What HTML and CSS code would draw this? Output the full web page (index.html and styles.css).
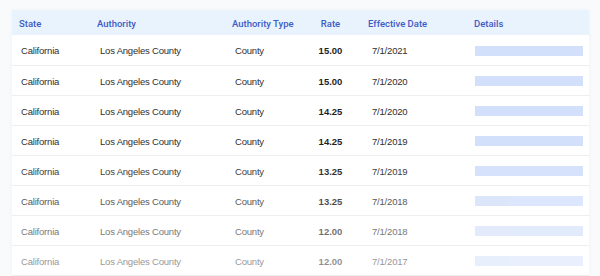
FILE: index.html
```html
<!DOCTYPE html>
<html lang="en">
<head>
<meta charset="utf-8">
<title>Rates</title>
<link rel="stylesheet" href="styles.css">
</head>
<body>
<div class="card">
  <table class="rates">
    <colgroup>
      <col class="c-state"><col class="c-auth"><col class="c-type"><col class="c-rate"><col class="c-date"><col class="c-details">
    </colgroup>
    <thead>
      <tr>
        <th>State</th><th>Authority</th><th>Authority Type</th><th class="num">Rate</th><th>Effective Date</th><th>Details</th>
      </tr>
    </thead>
    <tbody>
      <tr class="r1"><td>California</td><td>Los Angeles County</td><td>County</td><td class="num">15.00</td><td>7/1/2021</td><td><span class="bar"></span></td></tr>
      <tr class="r2"><td>California</td><td>Los Angeles County</td><td>County</td><td class="num">15.00</td><td>7/1/2020</td><td><span class="bar"></span></td></tr>
      <tr class="r3"><td>California</td><td>Los Angeles County</td><td>County</td><td class="num">14.25</td><td>7/1/2020</td><td><span class="bar"></span></td></tr>
      <tr class="r4"><td>California</td><td>Los Angeles County</td><td>County</td><td class="num">14.25</td><td>7/1/2019</td><td><span class="bar"></span></td></tr>
      <tr class="r5"><td>California</td><td>Los Angeles County</td><td>County</td><td class="num">13.25</td><td>7/1/2019</td><td><span class="bar"></span></td></tr>
      <tr class="r6"><td>California</td><td>Los Angeles County</td><td>County</td><td class="num">13.25</td><td>7/1/2018</td><td><span class="bar"></span></td></tr>
      <tr class="r7"><td>California</td><td>Los Angeles County</td><td>County</td><td class="num">12.00</td><td>7/1/2018</td><td><span class="bar"></span></td></tr>
      <tr class="r8"><td>California</td><td>Los Angeles County</td><td>County</td><td class="num">12.00</td><td>7/1/2017</td><td><span class="bar"></span></td></tr>
    </tbody>
  </table>
</div>
</body>
</html>
```
FILE: styles.css
```css
html, body {
  margin: 0;
  padding: 0;
  background: #f9fafb;
  font-family: "Liberation Sans", Arial, sans-serif;
  overflow: hidden;
}
.card {
  margin: 10px 11px 0 12px;
  background: #ffffff;
  box-shadow: 0 0 4px rgba(0, 0, 0, 0.04);
}
.rates {
  width: 577px;
  border-collapse: collapse;
  table-layout: fixed;
}
.c-state { width: 78px; }
.c-auth { width: 135px; }
.c-type { width: 75px; }
.c-rate { width: 61px; }
.c-date { width: 106px; }
.c-details { width: 122px; }

.rates th {
  box-sizing: border-box;
  height: 25px;
  padding: 1px 0 0 7px;
  background: #e8f3fd;
  color: #3f5bc4;
  font-family: Roboto, "Liberation Sans", sans-serif;
  font-size: 9.5px;
  font-weight: 500;
  text-align: left;
  white-space: nowrap;
}
.rates td {
  box-sizing: border-box;
  height: 30px;
  padding: 2px 0 0 9px;
  color: #2e2e2e;
  font-size: 9.5px;
  letter-spacing: -0.2px;
  white-space: nowrap;
  border-bottom: 1px solid #eeeeee;
}
.rates th.num, .rates td.num { text-align: center; padding-left: 0; }
.rates td.num { font-weight: 700; color: #1f1f1f; letter-spacing: 0; }
.rates td:nth-child(2), .rates td:nth-child(3) { padding-left: 10px; }
.rates td:nth-child(5) { padding-left: 11px; }
.rates td:last-child { padding-left: 8px; }
.bar {
  display: block;
  width: 108px;
  height: 10px;
  background: #d3e0fb;
}
.r5 { opacity: 0.92; }
.r6 { opacity: 0.8; }
.r7 { opacity: 0.65; }
.r8 { opacity: 0.5; }
```
